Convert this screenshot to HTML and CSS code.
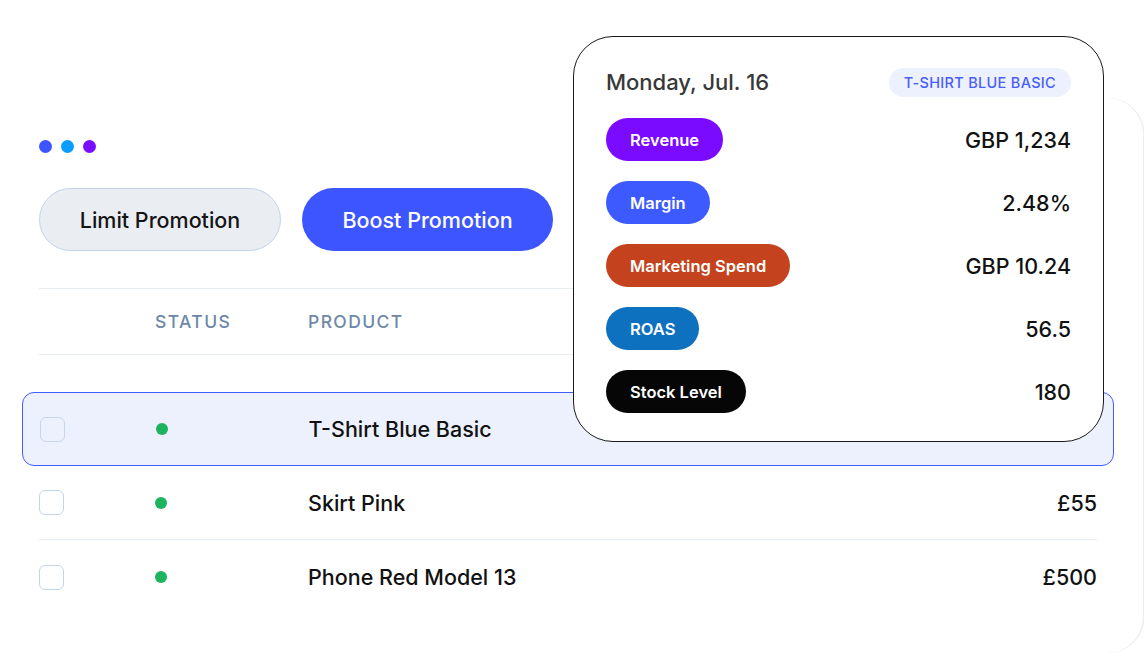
FILE: index.html
```html
<!DOCTYPE html>
<html>
<head>
<meta charset="utf-8">
<link rel="stylesheet" href="styles.css">
</head>
<body>
<div class="stage">
  <div class="panel">
    <div class="dots">
      <span class="dot d1"></span><span class="dot d2"></span><span class="dot d3"></span>
    </div>
    <div class="toolbar">
      <button class="btn btn-limit">Limit Promotion</button>
      <button class="btn btn-boost">Boost Promotion</button>
    </div>
    <div class="thead">
      <span></span>
      <span class="th">STATUS</span>
      <span class="th">PRODUCT</span>
      <span></span>
    </div>
    <div class="rows">
      <div class="row selected">
        <span class="check"></span>
        <span class="status"></span>
        <span class="product">T-Shirt Blue Basic</span>
        <span class="price"></span>
      </div>
      <div class="row lined">
        <span class="check"></span>
        <span class="status"></span>
        <span class="product">Skirt Pink</span>
        <span class="price">£55</span>
      </div>
      <div class="row">
        <span class="check"></span>
        <span class="status"></span>
        <span class="product">Phone Red Model 13</span>
        <span class="price">£500</span>
      </div>
    </div>
  </div>

  <div class="popup">
    <div class="popup-head">
      <span class="date">Monday, Jul. 16</span>
      <span class="tag">T-SHIRT BLUE BASIC</span>
    </div>
    <div class="metric"><span class="pill p-rev">Revenue</span><span class="val">GBP 1,234</span></div>
    <div class="metric"><span class="pill p-mar">Margin</span><span class="val">2.48%</span></div>
    <div class="metric"><span class="pill p-mkt">Marketing Spend</span><span class="val">GBP 10.24</span></div>
    <div class="metric"><span class="pill p-roas">ROAS</span><span class="val">56.5</span></div>
    <div class="metric"><span class="pill p-stock">Stock Level</span><span class="val">180</span></div>
  </div>
</div>
</body>
</html>
```

FILE: styles.css
```css
* { box-sizing: border-box; }
html, body {
  margin: 0;
  padding: 0;
  background: #ffffff;
}
body {
  font-family: Inter, "Noto Sans", "Liberation Sans", sans-serif;
  color: #111111;
}
.stage {
  position: relative;
  width: 1144px;
  height: 654px;
  overflow: hidden;
  padding-top: 98px;
}
.panel {
  width: 1183px;
  height: 555px;
  margin-left: -40px;
  background: #ffffff;
  border-radius: 36px;
  box-shadow: 1.5px 0 0 rgba(0, 0, 0, 0.07);
  padding: 42px 46px 0 79px;
}
.dots {
  display: flex;
  gap: 9px;
  height: 13px;
}
.dot {
  width: 13px;
  height: 13px;
  border-radius: 50%;
}
.d1 { background: #3d55ff; }
.d2 { background: #0a9cff; }
.d3 { background: #7a0dff; }

.toolbar {
  display: flex;
  gap: 21px;
  margin-top: 35px;
  margin-bottom: 37px;
}
.btn {
  height: 63px;
  border-radius: 32px;
  font-family: inherit;
  font-size: 21.5px;
  font-weight: 500;
  padding: 0;
  display: flex;
  align-items: center;
  justify-content: center;
}
.btn-limit {
  width: 242px;
  background: #eaeef3;
  border: 1px solid #c4d3e4;
  color: #151515;
}
.btn-boost {
  width: 251px;
  background: #3c55fe;
  border: none;
  color: #ffffff;
}

.thead, .row {
  display: grid;
  grid-template-columns: 116px 153px 1fr auto;
  align-items: center;
}
.thead {
  height: 67px;
  border-top: 1px solid #e9eef4;
  border-bottom: 1px solid #e9eef4;
}
.th {
  font-size: 17.5px;
  font-weight: 500;
  letter-spacing: 1.4px;
  color: #6e88a8;
}
.rows {
  margin-top: 37px;
}
.row {
  height: 74px;
}
.row.lined {
  border-bottom: 1px solid #e6edf7;
}
.row.selected {
  margin: 0 -17px;
  padding: 0 16.5px;
  background: #edf1fe;
  border: 1.5px solid #3f5cff;
  border-radius: 12px;
}
.check {
  width: 25px;
  height: 25px;
  border: 1.5px solid #c6d5e7;
  border-radius: 6px;
  background: transparent;
}
.status {
  width: 12px;
  height: 12px;
  border-radius: 50%;
  background: #1db35f;
}
.product {
  font-size: 21.5px;
  font-weight: 500;
  color: #111111;
}
.price {
  font-size: 21.5px;
  font-weight: 500;
  color: #111111;
  text-align: right;
}

.popup {
  position: absolute;
  left: 573px;
  top: 36px;
  width: 531px;
  height: 406px;
  background: #ffffff;
  border: 1px solid #1a1a1a;
  border-radius: 40px;
  padding: 30px 32px 0 32px;
  display: flex;
  flex-direction: column;
  gap: 20px;
}
.popup-head {
  display: flex;
  justify-content: space-between;
  align-items: center;
  height: 30px;
  margin-bottom: 1px;
}
.date {
  font-size: 22px;
  font-weight: 500;
  color: #383838;
}
.tag {
  height: 29px;
  padding: 0 15px;
  border-radius: 15px;
  background: #edf1fe;
  color: #4a5ff8;
  font-size: 14.5px;
  font-weight: 500;
  letter-spacing: 0.3px;
  display: flex;
  align-items: center;
}
.metric {
  display: flex;
  justify-content: space-between;
  align-items: center;
  height: 43px;
}
.pill {
  height: 43px;
  padding: 0 24px;
  border-radius: 22px;
  color: #ffffff;
  font-size: 16.5px;
  font-weight: 600;
  display: flex;
  align-items: center;
}
.p-rev { background: #7b0bff; }
.p-mar { background: #3d5afe; }
.p-mkt { background: #c4431e; }
.p-roas { background: #0e71c0; }
.p-stock { background: #060606; }
.val {
  font-size: 21.5px;
  font-weight: 500;
  color: #111111;
}
```
